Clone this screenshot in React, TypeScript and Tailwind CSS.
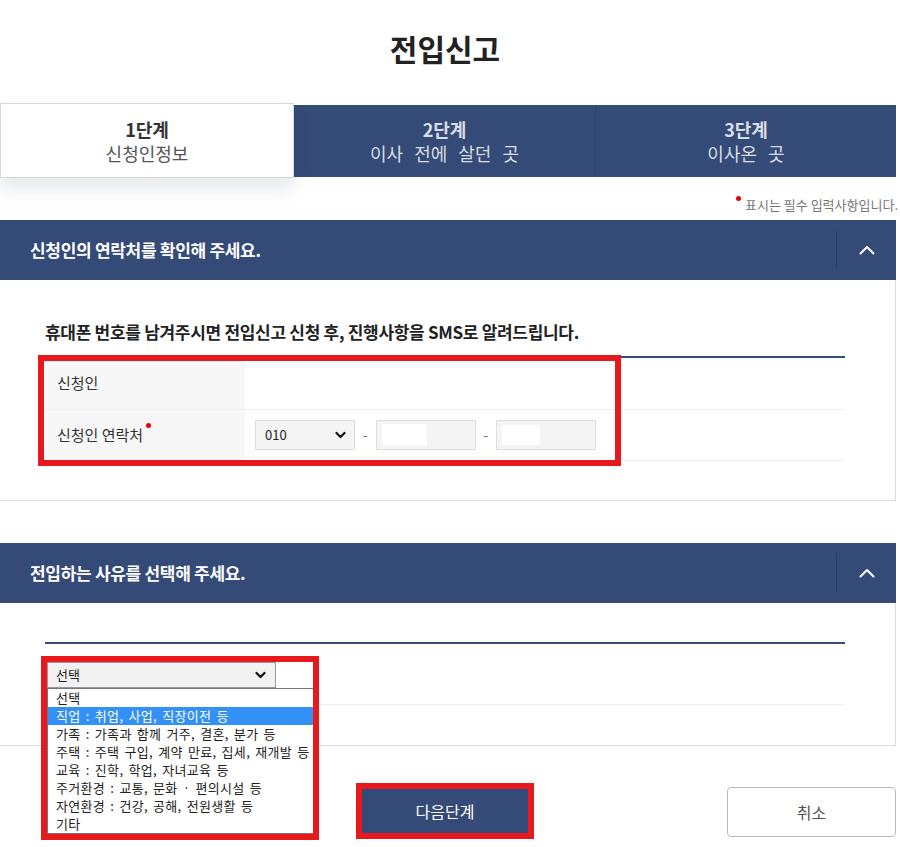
import React from 'react';

const NAVY = 'bg-[#344a77]';

const ChevronUp = () => (
  <svg width="16" height="10" viewBox="0 0 16 10" fill="none">
    <polyline points="1.5,8.5 8,2 14.5,8.5" stroke="white" strokeWidth="2" strokeLinecap="round" strokeLinejoin="round" />
  </svg>
);

const ChevronDown = () => (
  <svg width="11" height="8" viewBox="0 0 11 8" fill="none">
    <polyline points="1.5,2 5.5,6 9.5,2" stroke="#111" strokeWidth="2.2" strokeLinecap="round" strokeLinejoin="round" />
  </svg>
);

const SectionHeader = ({ title }: { title: string }) => (
  <div className={`${NAVY} h-[60px] flex items-center`}>
    <h3 className="flex-1 pl-[30px] text-[17px] font-bold text-white tracking-[-0.3px]">{title}</h3>
    <div className="h-[40px] w-[60px] border-l border-[#2c3f66] flex items-center justify-center">
      <ChevronUp />
    </div>
  </div>
);

const reasons = [
  '선택',
  '직업 : 취업, 사업, 직장이전 등',
  '가족 : 가족과 함께 거주, 결혼, 분가 등',
  '주택 : 주택 구입, 계약 만료, 집세, 재개발 등',
  '교육 : 진학, 학업, 자녀교육 등',
  '주거환경 : 교통, 문화 · 편의시설 등',
  '자연환경 : 건강, 공해, 전원생활 등',
  '기타',
];

const App = () => {
  return (
    <div className="w-[900px] min-h-[847px] bg-white font-['Noto_Sans_CJK_KR','Noto_Sans',sans-serif] text-[#333]">
      <div className="w-[896px]">
        {/* title */}
        <div className="h-[105px] flex items-center justify-center pb-[8px] pr-[6px]">
          <h1 className="text-[30px] font-bold text-[#222]">전입신고</h1>
        </div>

        {/* steps */}
        <div className="flex h-[72px] [word-spacing:7px]">
          <div className="relative z-10 -mt-[2px] h-[75px] w-[294px] bg-white border border-[#d3d8e0] shadow-[0_10px_18px_rgba(40,50,70,0.12)] flex flex-col items-center justify-center leading-[24px]">
            <span className="text-[18px] font-bold text-[#333]">1단계</span>
            <span className="text-[18px] text-[#555]">신청인정보</span>
          </div>
          <div className={`${NAVY} w-[302px] border-r border-[#2e4370] flex flex-col items-center justify-center leading-[24px] text-[#d9dde6]`}>
            <span className="text-[18px] font-bold">2단계</span>
            <span className="text-[18px]">이사 전에 살던 곳</span>
          </div>
          <div className={`${NAVY} flex-1 flex flex-col items-center justify-center leading-[24px] text-[#d9dde6]`}>
            <span className="text-[18px] font-bold">3단계</span>
            <span className="text-[18px]">이사온 곳</span>
          </div>
        </div>

        {/* required note */}
        <div className="h-[43px] flex items-end justify-end pb-[6px] -mr-[2px]">
          <span className="relative text-[13px] text-[#777] pl-[9px]">
            <span className="absolute left-[0px] top-[1px] w-[5px] h-[5px] rounded-full bg-[#e60012]" />
            표시는 필수 입력사항입니다.
          </span>
        </div>

        {/* section 1 */}
        <SectionHeader title="신청인의 연락처를 확인해 주세요." />
        <div className="h-[221px] border-r border-b border-[#dcdcdc] pl-[45px] pr-[50px] pt-[40px]">
          <p className="text-[17px] font-bold text-[#222] tracking-[-0.3px] leading-[24px] mb-[12px]">
            휴대폰 번호를 남겨주시면 전입신고 신청 후, 진행사항을 SMS로 알려드립니다.
          </p>
          <div className="relative border-t-2 border-[#344a77]">
            <div className="flex h-[52px] border-b border-[#eeeeee]">
              <div className="w-[200px] bg-[#f7f7f7] pl-[12px] flex items-center text-[15px] text-[#333]">신청인</div>
              <div className="flex-1" />
            </div>
            <div className="flex h-[51px] border-b border-[#eeeeee]">
              <div className="w-[200px] bg-[#f7f7f7] pl-[12px] flex items-center text-[15px] text-[#333]">
                <span className="relative">
                  신청인 연락처
                  <span className="absolute -right-[8px] top-[-1px] w-[5px] h-[5px] rounded-full bg-[#e60012]" />
                </span>
              </div>
              <div className="flex-1 flex items-center pl-[10px] gap-[8px] text-[13px] text-[#666]">
                <div className="w-[100px] h-[30px] bg-[#f4f4f4] border border-[#dddddd] flex items-center justify-between pl-[9px] pr-[8px]">
                  <span className="text-[13px] text-[#222]">010</span>
                  <ChevronDown />
                </div>
                <span>-</span>
                <div className="w-[100px] h-[30px] bg-[#f4f4f4] border border-[#dddddd] flex items-center pl-[5px]">
                  <div className="w-[45px] h-[22px] bg-white" />
                </div>
                <span>-</span>
                <div className="w-[100px] h-[30px] bg-[#f4f4f4] border border-[#dddddd] flex items-center pl-[5px]">
                  <div className="w-[38px] h-[20px] bg-white" />
                </div>
              </div>
            </div>
            {/* annotation */}
            <div className="absolute -left-[7px] -top-[3px] w-[583px] h-[111px] border-[6px] border-[#e8181d] pointer-events-none" />
          </div>
        </div>

        {/* section 2 */}
        <div className="mt-[42px]">
          <SectionHeader title="전입하는 사유를 선택해 주세요." />
          <div className="h-[143px] border-r border-b border-[#dcdcdc] pl-[45px] pr-[50px] pt-[39px]">
            <div className="relative border-t-2 border-[#344a77]">
              <div className="h-[61px] border-b border-[#eeeeee] pt-[18px] pl-[2px]">
                <div className="relative flex">
                  <div className="w-[229px] h-[26px] bg-[#f2f2f2] border border-[#999] flex items-center justify-between pl-[8px] pr-[9px]">
                    <span className="text-[13px] text-[#222]">선택</span>
                    <ChevronDown />
                  </div>
                  <span className="absolute left-[234px] -top-[5px] w-[5px] h-[5px] rounded-full bg-[#e60012]" />
                  {/* open list */}
                  <ul className="absolute z-20 left-0 top-[26px] w-[267px] bg-white border border-[#767676] shadow-[1px_1px_2px_rgba(0,0,0,0.15)]">
                    {reasons.map((r, i) => (
                      <li
                        key={r}
                        className={`h-[18px] leading-[18px] pl-[8px] text-[13px] tracking-[0.3px] [word-spacing:2px] whitespace-nowrap overflow-hidden ${i === 1 ? 'bg-[#3390f5] text-white' : 'text-[#222]'}`}
                      >
                        {r}
                      </li>
                    ))}
                  </ul>
                  {/* annotation */}
                  <div className="absolute z-30 -left-[6px] -top-[6px] w-[278px] h-[184px] border-[6px] border-[#e8181d] pointer-events-none" />
                </div>
              </div>
            </div>
          </div>
        </div>

        {/* buttons */}
        <div className="mt-[37px] flex items-center">
          <div className="ml-[356px] border-[6px] border-[#e8181d]">
            <button className={`${NAVY} w-[166px] h-[44px] text-white text-[16px] flex items-center justify-center`}>
              다음단계
            </button>
          </div>
          <button className="ml-auto mt-[2px] w-[169px] h-[50px] rounded-[4px] border border-[#bbbbbb] bg-white text-[16px] text-[#555]">
            취소
          </button>
        </div>
      </div>
    </div>
  );
};

export default App;
